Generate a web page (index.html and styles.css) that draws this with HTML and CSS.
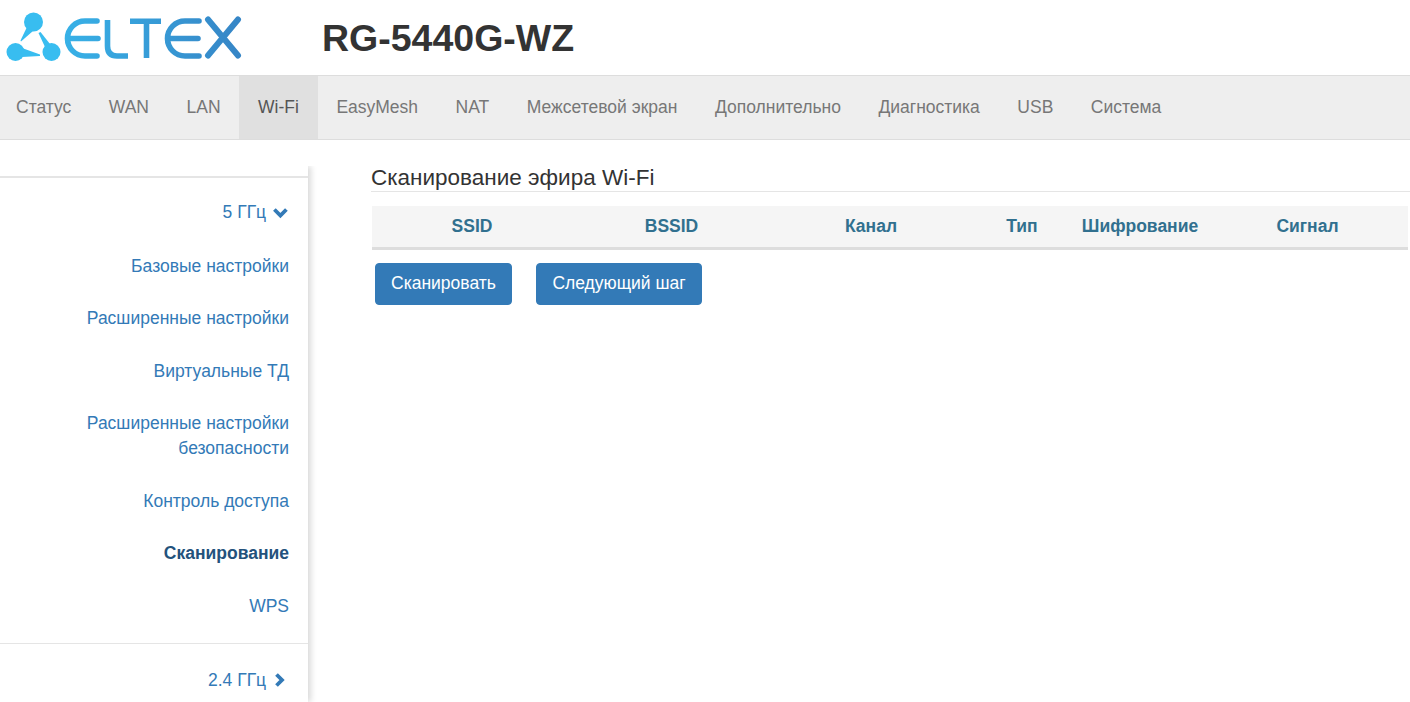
FILE: index.html
```html
<!DOCTYPE html>
<html lang="ru">
<head>
  <meta charset="UTF-8" />
  <title>RG-5440G-WZ</title>
  <link rel="stylesheet" href="styles.css">
</head>
<body>

  <header class="top">
    <svg class="logo" width="250" height="75" viewBox="0 0 250 75" aria-label="ELTEX">
      <defs>
        <linearGradient id="grad" gradientUnits="userSpaceOnUse" x1="5" y1="0" x2="242" y2="0">
          <stop offset="0" stop-color="#38c0f2" />
          <stop offset="1" stop-color="#3685c6" />
        </linearGradient>
      </defs>
      <g fill="#38bdf0">
        <circle cx="33.500" cy="22" r="9.500" />
        <circle cx="15.500" cy="52" r="9" />
        <circle cx="51.500" cy="52" r="9" />
        <path d="M26.500 28 L33 31 L21 41.500 L20.500 40.500 Z" />
        <path d="M22 48 L40 54.500 L40 56 L22 57 Z" />
        <path d="M38.500 33 L40.500 32 L50 44 L45 47 Z" />
      </g>
      <g fill="none" stroke="url(#grad)" stroke-width="5.600" stroke-linecap="round" stroke-linejoin="round">
        <path d="M97 21 H85 A17.500 17.500 0 0 0 85 56 H97 M70 38.500 H98" />
        <path d="M107.500 20 V46 Q107.500 56 117 56 H128" stroke-linecap="butt" />
        <path d="M130 21.300 H161 M146.500 21.300 V58" stroke-linecap="butt" />
        <path d="M199 21 H185 A17.500 17.500 0 0 0 185 56 H199 M171 38.500 H198" />
        <path d="M208 19.500 L238 55.500 M238 19.500 L208 55.500" stroke-width="6" />
      </g>
    </svg>
    <h1 class="model">RG-5440G-WZ</h1>
  </header>

  <nav class="menu">
    <a href="#">Статус</a>
    <a href="#">WAN</a>
    <a href="#">LAN</a>
    <a href="#" class="active">Wi-Fi</a>
    <a href="#">EasyMesh</a>
    <a href="#">NAT</a>
    <a href="#">Межсетевой экран</a>
    <a href="#">Дополнительно</a>
    <a href="#">Диагностика</a>
    <a href="#">USB</a>
    <a href="#">Система</a>
  </nav>

  <div class="content">
    <aside class="side">
      <div class="side-group">
        <a href="#" class="band">5 ГГц
          <svg class="chev" width="16" height="12" viewBox="0 0 16 12"><path d="M1.400 2.500 L7.400 8.500 L13.400 2.500" /></svg>
        </a>
        <a href="#">Базовые настройки</a>
        <a href="#">Расширенные настройки</a>
        <a href="#">Виртуальные ТД</a>
        <a href="#">Расширенные настройки безопасности</a>
        <a href="#">Контроль доступа</a>
        <a href="#" class="current">Сканирование</a>
        <a href="#">WPS</a>
      </div>
      <div class="side-group">
        <a href="#" class="band">2.4 ГГц
          <svg class="chev" width="16" height="14" viewBox="0 0 16 14"><path d="M3.500 1.500 L9 7 L3.500 12.500" /></svg>
        </a>
      </div>
    </aside>

    <main class="main">
      <h2 class="title">Сканирование эфира Wi-Fi</h2>
      <table class="scan">
        <thead>
          <tr>
            <th class="c1">SSID</th>
            <th class="c2">BSSID</th>
            <th class="c3">Канал</th>
            <th class="c4">Тип</th>
            <th class="c5">Шифрование</th>
            <th class="c6">Сигнал</th>
          </tr>
        </thead>
      </table>
      <div class="actions">
        <button type="button" class="btn">Сканировать</button>
        <button type="button" class="btn btn-next">Следующий шаг</button>
      </div>
    </main>
  </div>

</body>
</html>
```

FILE: styles.css
```css
html, body {
  height: 100%;
}

body {
  margin: 0;
  background: #fff;
  font-family: "Liberation Sans", Arial, sans-serif;
  font-size: 17.5px;
  color: #333;
  overflow: hidden;
}

a {
  text-decoration: none;
}

.top {
  display: flex;
  align-items: center;
  height: 75px;
}

.logo {
  display: block;
  flex: none;
}

.model {
  margin: 2px 0 0 72px;
  font-size: 37.5px;
  font-weight: bold;
  color: #333;
}

.menu {
  display: flex;
  height: 63px;
  background: #eee;
  border-top: 1px solid #ddd;
  border-bottom: 1px solid #ddd;
}

.menu a {
  padding: 0 18.750px;
  line-height: 62px;
  color: #777;
}

.menu a:first-child {
  padding-left: 16px;
}

.menu a.active {
  background: #e0e0e0;
  color: #555;
}

.content {
  display: flex;
}

.side {
  flex: none;
  box-sizing: border-box;
  width: 308px;
  height: 536px;
  margin-top: 26px;
  padding-top: 10px;
  box-shadow: 3px 0 6px rgba(0,0,0,0.15);
  clip-path: inset(0 -12px 0 0);
}

.side-group {
  border-top: 2px solid #e5e5e5;
  padding: 8px 0 11.500px;
}

.side-group + .side-group {
  border-top-width: 1px;
  padding-top: 10px;
}

.side a {
  display: block;
  padding: 14.500px 19px 13px 60px;
  line-height: 25px;
  text-align: right;
  color: #337ab7;
}

.side .band {
  padding: 14px 19px 14px 60px;
}

.side .current {
  font-weight: bold;
  color: #23527c;
}

.chev {
  margin-left: 2px;
  vertical-align: -1px;
}

.chev path {
  fill: none;
  stroke: #337ab7;
  stroke-width: 3.800;
}

.main {
  flex: 1;
  padding: 25px 0 0 63px;
}

.title {
  margin: 0;
  border-bottom: 1px solid #e5e5e5;
  font-size: 22.500px;
  font-weight: normal;
  line-height: 26px;
  color: #333;
}

.scan {
  width: 1036px;
  margin: 14px 0 0 1px;
  border-collapse: collapse;
  table-layout: fixed;
}

.scan th {
  height: 42px;
  padding: 1px 0 0;
  box-sizing: border-box;
  background: #f5f5f5;
  border-bottom: 3px solid #ddd;
  font-size: 17.500px;
  font-weight: bold;
  color: #31708f;
}

.c1 { width: 200px; }
.c2 { width: 199px; }
.c3 { width: 200px; }
.c4 { width: 102px; }
.c5 { width: 134px; }
.c6 { width: 201px; }

.actions {
  display: flex;
  gap: 24px;
  margin: 13px 0 0 4px;
}

.btn {
  height: 42px;
  padding: 0 15px;
  background: #337ab7;
  border: 1px solid #337ab7;
  border-radius: 4px;
  font-family: inherit;
  font-size: 17.500px;
  color: #fff;
}

.btn-next {
  padding: 0 15.500px;
}
```
